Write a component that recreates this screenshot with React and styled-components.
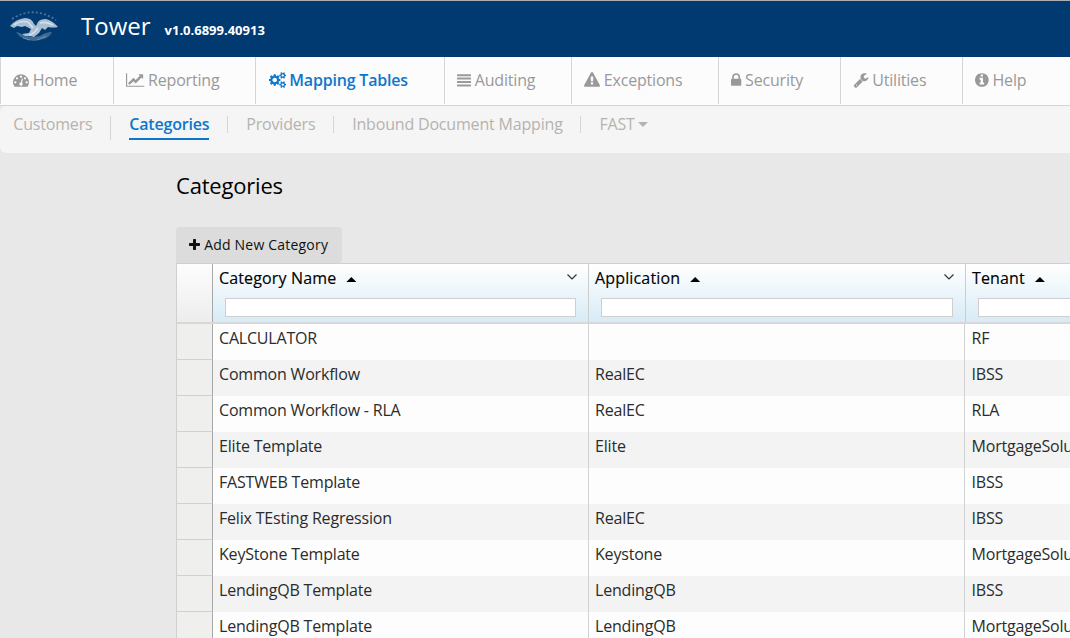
import React from 'react';
import styled, { createGlobalStyle } from 'styled-components';

const GlobalStyle = createGlobalStyle`
  * { box-sizing: border-box; }
  body {
    margin: 0;
    background: #e8e8e8;
    font-family: 'Open Sans', 'Liberation Sans', sans-serif;
    font-size: 16px;
    overflow: hidden;
  }
`;

const Page = styled.div`
  width: 100%;
  height: 638px;
  overflow: hidden;
`;

const Header = styled.header`
  display: flex;
  height: 57px;
  padding-left: 8px;
  background: #003a70;
  border-top: 1px solid #a9afb5;
  color: #fff;
`;

const Logo = styled.svg`
  width: 52px;
  height: 36px;
  margin-top: 7px;
  flex: none;
`;

const Brand = styled.h1`
  margin: 0 0 0 21px;
  font-size: 24px;
  font-weight: 400;
  line-height: 50px;
`;

const Version = styled.span`
  margin-left: 14px;
  font-size: 13px;
  font-weight: 700;
  line-height: 58px;
`;

const Nav = styled.nav`
  display: flex;
  height: 49px;
  padding-bottom: 1px;
  background: #fcfcfc;
  border-bottom: 1px solid #d5d5d5;
`;

const NavItem = styled.a`
  display: flex;
  flex: none;
  width: ${(p) => p.$width}px;
  padding-left: ${(p) => (p.$active ? 12.6 : 12.3)}px;
  border-left: 1px solid #d5d5d5;
  line-height: 46px;
  letter-spacing: -0.19px;
  white-space: nowrap;
  color: ${(p) => (p.$active ? '#0c77cc' : '#999')};
  font-weight: ${(p) => (p.$active ? 600 : 400)};
`;

const Icon = styled.svg`
  flex: none;
  height: ${(p) => p.$size || 16}px;
  margin: ${(p) => p.$top || 15}px ${(p) => p.$gap || 3.5}px 0 0;
  fill: currentColor;
`;

const SubNav = styled.div`
  display: flex;
  height: 47px;
  padding: 5px 0 0 13.3px;
  background: #f5f5f5;
  border-radius: 6px 0 0 6px;
  letter-spacing: -0.18px;
`;

const SubItem = styled.a`
  flex: none;
  height: 29px;
  line-height: 27px;
  white-space: nowrap;
  color: ${(p) => (p.$active ? '#0c77cc' : '#b5b3ae')};
  font-weight: ${(p) => (p.$active ? 600 : 400)};
  border-bottom: 2px solid ${(p) => (p.$active ? '#0c77cc' : 'transparent')};
`;

const Divider = styled.span`
  flex: none;
  width: 1px;
  height: ${(p) => p.$height || 17}px;
  margin: 5px 18.2px 0 17.6px;
  background: #d5d5d5;
`;

const Caret = styled.span`
  display: inline-block;
  margin-left: 3px;
  vertical-align: 3px;
  border: 5px solid transparent;
  border-top-color: currentColor;
  border-bottom: 0;
`;

const Main = styled.main`
  padding: 17px 0 0 176px;
`;

const Title = styled.h2`
  margin: 0;
  height: 57px;
  font-size: 22px;
  font-weight: 400;
  line-height: 30px;
  letter-spacing: -0.2px;
  color: #000;
`;

const AddButton = styled.button`
  display: flex;
  width: 166px;
  height: 36px;
  padding: 0 0 0 12.6px;
  border: 0;
  border-radius: 4px 4px 4px 0;
  background: #dcdcdc;
  color: #111;
  font: 400 14px/35px 'Open Sans', sans-serif;
  letter-spacing: 0.2px;
  white-space: nowrap;
`;

const Grid = styled.div`
  width: 1165px;
  border: 1px solid #d0d0d0;
`;

const HeadRow = styled.div`
  display: flex;
  height: 60px;
  border-bottom: 2px solid #d8d8d8;
`;

const HeadSelector = styled.div`
  width: 36px;
  flex: none;
  background: linear-gradient(#fdfdfd, #ededed);
  border-right: 1px solid #a8a8a8;
`;

const HeadCell = styled.div`
  flex: none;
  width: ${(p) => p.$width}px;
  background: linear-gradient(#fff, #d7ebf6);
  border-right: 1px solid #cdcdcd;
`;

const HeadLabel = styled.div`
  display: flex;
  height: 34px;
  padding: 0 11px 0 6px;
  font-weight: 500;
  line-height: 28px;
  letter-spacing: 0.15px;
  color: #000;
  -webkit-text-stroke: 0.15px #000;
`;

const SortArrow = styled.span`
  width: 10px;
  height: 5px;
  margin: 13px auto 0 10px;
  background: #000;
  clip-path: polygon(50% 0, 100% 100%, 0 100%);
`;

const Chevron = styled.svg`
  width: 10px;
  height: 6px;
  margin-top: 10px;
  fill: none;
  stroke: #333;
  stroke-width: 1.2;
`;

const Filter = styled.input`
  display: block;
  width: calc(100% - 24px);
  height: 19px;
  margin-left: 12px;
  padding: 0;
  border: 1px solid #cfcfcf;
  background: #fff;
`;

const Row = styled.div`
  display: flex;
  height: 36px;
  background: ${(p) => (p.$alt ? '#f3f3f3' : '#fdfdfd')};
`;

const Selector = styled.div`
  flex: none;
  width: 36px;
  background: #efefed;
  border-right: 1px solid #a8a8a8;
  border-bottom: 1px solid #d0d0d0;
`;

const Cell = styled.div`
  flex: none;
  width: ${(p) => p.$width}px;
  padding-left: ${(p) => p.$indent}px;
  line-height: 29px;
  letter-spacing: -0.19px;
  white-space: nowrap;
  color: #2b2b2b;
  border-right: 1px solid #d2d2d2;
`;

const smallGear = 'v140q0 16-149 31-12 27-30 52 51 113 51 138 0 4-4 7-122 71-124 71-8 0-46-47t-52-68q-20 2-30 2t-30-2q-14 21-52 68t-46 47q-2 0-124-71-4-3-4-7 0-25 51-138-18-25-30-52-149-15-149-31v-140q0-16 149-31 13-29 30-52-51-113-51-138 0-4 4-7 4-2 35-20t59-34 30-16q8 0 46 46.5t52 67.5q20-2 30-2t30 2q51-71 92-112l6-2q4 0 124 70 4 3 4 7 0 25-51 138 17 23 30 52 149 15 149 31z';

const icons = {
  gauge: [1792, 'M384 1152q0-53-37.5-90.5t-90.5-37.5-90.5 37.5-37.5 90.5 37.5 90.5 90.5 37.5 90.5-37.5 37.5-90.5zm192-448q0-53-37.5-90.5t-90.5-37.5-90.5 37.5-37.5 90.5 37.5 90.5 90.5 37.5 90.5-37.5 37.5-90.5zm428 481l101-382q6-26-7.5-48.5t-38.5-29.5-48 6.5-30 39.5l-101 382q-60 5-107 43.5t-63 98.5q-20 77 20 146t117 89 146-20 89-117q16-60-6-117t-72-91zm660-33q0-53-37.5-90.5t-90.5-37.5-90.5 37.5-37.5 90.5 37.5 90.5 90.5 37.5 90.5-37.5 37.5-90.5zm-640-640q0-53-37.5-90.5t-90.5-37.5-90.5 37.5-37.5 90.5 37.5 90.5 90.5 37.5 90.5-37.5 37.5-90.5zm448 192q0-53-37.5-90.5t-90.5-37.5-90.5 37.5-37.5 90.5 37.5 90.5 90.5 37.5 90.5-37.5 37.5-90.5zm320 448q0 261-141 483-19 29-54 29h-1402q-35 0-54-29-141-221-141-483 0-182 71-348t191-286 286-191 348-71 348 71 286 191 191 286 71 348z'],
  chart: [2048, 'M2048 1536v128h-2048v-1536h128v1408h1920zm-128-1248v435q0 21-19.5 29.5t-35.5-7.5l-121-121-633 633q-10 10-23 10t-23-10l-233-233-416 416-192-192 585-585q10-10 23-10t23 10l233 233 464-464-121-121q-16-16-7.5-35.5t29.5-19.5h435q14 0 23 9t9 23z'],
  cogs: [1920, 'M896 896q0-106-75-181t-181-75-181 75-75 181 75 181 181 75 181-75 75-181zm768 512q0-52-38-90t-90-38-90 38-38 90q0 53 37.5 90.5t90.5 37.5 90.5-37.5 37.5-90.5zm0-1024q0-52-38-90t-90-38-90 38-38 90q0 53 37.5 90.5t90.5 37.5 90.5-37.5 37.5-90.5zm-384 421v185q0 10-7 19.5t-16 10.5l-155 24q-11 35-32 76 34 48 90 115 7 11 7 20 0 12-7 19-23 30-82.5 89.5t-78.5 59.5q-11 0-21-7l-115-90q-37 19-77 31-11 108-23 155-7 24-30 24h-186q-11 0-20-7.5t-10-17.5l-23-153q-34-10-75-31l-118 89q-7 7-20 7-11 0-21-8-144-133-144-160 0-9 7-19 10-14 41-53t47-61q-23-44-35-82l-152-24q-10-1-17-9.5t-7-19.5v-185q0-10 7-19.5t16-10.5l155-24q11-35 32-76-34-48-90-115-7-11-7-20 0-12 7-20 22-30 82-89t79-59q11 0 21 7l115 90q34-18 77-32 11-108 23-154 7-24 30-24h186q11 0 20 7.5t10 17.5l23 153q34 10 75 31l118-89q8-7 20-7 11 0 21 8 144 133 144 160 0 9-7 19-12 16-42 54t-45 60q23 48 34 82l152 23q10 2 17 10.5t7 19.5zM1920 1338' + smallGear + 'M1920 314' + smallGear],
  lines: [1568, 'M40 240h1488q40 0 40 40v144q0 40-40 40h-1488q-40 0-40-40v-144q0-40 40-40zM40 624h1488q40 0 40 40v144q0 40-40 40h-1488q-40 0-40-40v-144q0-40 40-40zM40 1008h1488q40 0 40 40v144q0 40-40 40h-1488q-40 0-40-40v-144q0-40 40-40zM40 1392h1488q40 0 40 40v144q0 40-40 40h-1488q-40 0-40-40v-144q0-40 40-40z'],
  warning: [1792, 'M1024 1375v-190q0-14-9.5-23.5t-22.5-9.5h-192q-13 0-22.5 9.5t-9.5 23.5v190q0 14 9.5 23.5t22.5 9.5h192q13 0 22.5-9.5t9.5-23.5zm-2-374l18-459q0-12-10-19-13-11-24-11h-220q-11 0-24 11-10 7-10 21l17 457q0 10 10 16.5t24 6.5h185q14 0 23.5-6.5t10.5-16.5zm-14-934l768 1408q35 63-2 126-17 29-46.5 46t-63.5 17h-1536q-34 0-63.5-17t-46.5-46q-37-63-2-126l768-1408q17-31 47-49t65-18 65 18 47 49z'],
  lock: [1152, 'M320 768h512v-192q0-106-75-181t-181-75-181 75-75 181v192zm832 96v576q0 40-28 68t-68 28h-960q-40 0-68-28t-28-68v-576q0-40 28-68t68-28h32v-192q0-184 132-316t316-132 316 132 132 316v192h32q40 0 68 28t28 68z'],
  wrench: [1728, 'M448 1472q0-26-19-45t-45-19-45 19-19 45 19 45 45 19 45-19 19-45zm644-420l-682 682q-37 37-90 37-52 0-91-37l-106-108q-38-36-38-90 0-53 38-91l681-681q39 98 114.5 173.5t173.5 114.5zm634-435q0 39-23 106-47 134-164.5 217.5t-258.5 83.5q-185 0-316.5-131.5t-131.5-316.5 131.5-316.5 316.5-131.5q58 0 121.5 16.5t107.5 46.5q16 11 16 28t-16 28l-293 169v224l193 107q5-3 79-48.5t135.5-81 70.5-35.5q15 0 23.5 10t8.5 25z'],
  info: [1536, 'M1024 1376v-160q0-14-9-23t-23-9h-96v-512q0-14-9-23t-23-9h-320q-14 0-23 9t-9 23v160q0 14 9 23t23 9h96v320h-96q-14 0-23 9t-9 23v160q0 14 9 23t23 9h448q14 0 23-9t9-23zm-128-896v-160q0-14-9-23t-23-9h-192q-14 0-23 9t-9 23v160q0 14 9 23t23 9h192q14 0 23-9t9-23zm640 416q0 209-103 385.5t-279.5 279.5-385.5 103-385.5-103-279.5-279.5-103-385.5 103-385.5 279.5-279.5 385.5-103 385.5 103 279.5 279.5 103 385.5z'],
  plus: [1408, 'M1408 736v192q0 40-28 68t-68 28h-416v416q0 40-28 68t-68 28h-192q-40 0-68-28t-28-68v-416h-416q-40 0-68-28t-28-68v-192q0-40 28-68t68-28h416v-416q0-40 28-68t68-28h192q40 0 68 28t28 68v416h416q40 0 68 28t28 68z'],
};

function Glyph({ name, size = 16, top, gap }) {
  const [width, path] = icons[name];
  return (
    <Icon viewBox={`0 0 ${width} 1792`} width={(width / 1792) * size} $size={size} $top={top} $gap={gap}>
      <path d={path} />
    </Icon>
  );
}

function Eagle() {
  return (
    <Logo viewBox="0 0 52 36">
      <path d="M4 11Q25-3 48 12" fill="none" stroke="#6b8bab" strokeWidth="1.8" strokeDasharray="2 2.2" opacity=".7" />
      <path d="M8 24Q11 24 15 27L24 29L32 28Q38 24 44 24Q42 29 36 31L26 33Q13 32 8 24Z" fill="#4a739c" opacity=".85" />
      <path d="M2 18Q8 11 17 10Q24 10 26 16L28 18L30 14Q32 11 38 11Q45 13 50 19Q45 20 40 19L37 22L34 20L31 25L26 29L22 28L17 28L14 26L21 25L23 21L17 18L14 19L9 18L6 20Z" fill="#a9bfd4" />
      <path d="M6 17Q12 12 20 14L25 20M32 15Q38 13 45 17M21 27Q26 26 30 20" fill="none" stroke="#d3dfea" strokeWidth="1.6" />
      <path d="M15 30L22 32M29 32L38 28" stroke="#7d9cba" strokeWidth="1.2" opacity=".7" />
    </Logo>
  );
}

const navItems = [
  ['gauge', 'Home', 113],
  ['chart', 'Reporting', 142],
  ['cogs', 'Mapping Tables', 189, true],
  ['lines', 'Auditing', 127],
  ['warning', 'Exceptions', 147],
  ['lock', 'Security', 122],
  ['wrench', 'Utilities', 122],
  ['info', 'Help', 120],
];

const columns = [
  ['Category Name', 376],
  ['Application', 377],
  ['Tenant', 376],
];

const cellWidths = [376, 376, 377];
const cellIndents = [6, 6, 6.5];

const rows = [
  ['CALCULATOR', '', 'RF'],
  ['Common Workflow', 'RealEC', 'IBSS'],
  ['Common Workflow - RLA', 'RealEC', 'RLA'],
  ['Elite Template', 'Elite', 'MortgageSolutions'],
  ['FASTWEB Template', '', 'IBSS'],
  ['Felix TEsting Regression', 'RealEC', 'IBSS'],
  ['KeyStone Template', 'Keystone', 'MortgageSolutions'],
  ['LendingQB Template', 'LendingQB', 'IBSS'],
  ['LendingQB Template', 'LendingQB', 'MortgageSolutions'],
];

export default function App() {
  return (
    <Page>
      <GlobalStyle />
      <Header>
        <Eagle />
        <Brand>Tower</Brand>
        <Version>v1.0.6899.40913</Version>
      </Header>
      <Nav>
        {navItems.map(([icon, label, width, active]) => (
          <NavItem key={label} $width={width} $active={active}>
            <Glyph name={icon} />
            {label}
          </NavItem>
        ))}
      </Nav>
      <SubNav>
        <SubItem>Customers</SubItem>
        <Divider $height={24} />
        <SubItem $active>Categories</SubItem>
        <Divider />
        <SubItem>Providers</SubItem>
        <Divider />
        <SubItem>Inbound Document Mapping</SubItem>
        <Divider />
        <SubItem>FAST<Caret /></SubItem>
      </SubNav>
      <Main>
        <Title>Categories</Title>
        <AddButton>
          <Glyph name="plus" size={14} top={11} gap={4.6} />
          Add New Category
        </AddButton>
        <Grid>
          <HeadRow>
            <HeadSelector />
            {columns.map(([label, width]) => (
              <HeadCell key={label} $width={width}>
                <HeadLabel>
                  {label}
                  <SortArrow />
                  <Chevron viewBox="0 0 10 6"><path d="M.5.5 5 5 9.5.5" /></Chevron>
                </HeadLabel>
                <Filter />
              </HeadCell>
            ))}
          </HeadRow>
          {rows.map((row, i) => (
            <Row key={i} $alt={i % 2 === 1}>
              <Selector />
              {row.map((text, j) => (
                <Cell key={j} $width={cellWidths[j]} $indent={cellIndents[j]}>{text}</Cell>
              ))}
            </Row>
          ))}
        </Grid>
      </Main>
    </Page>
  );
}
